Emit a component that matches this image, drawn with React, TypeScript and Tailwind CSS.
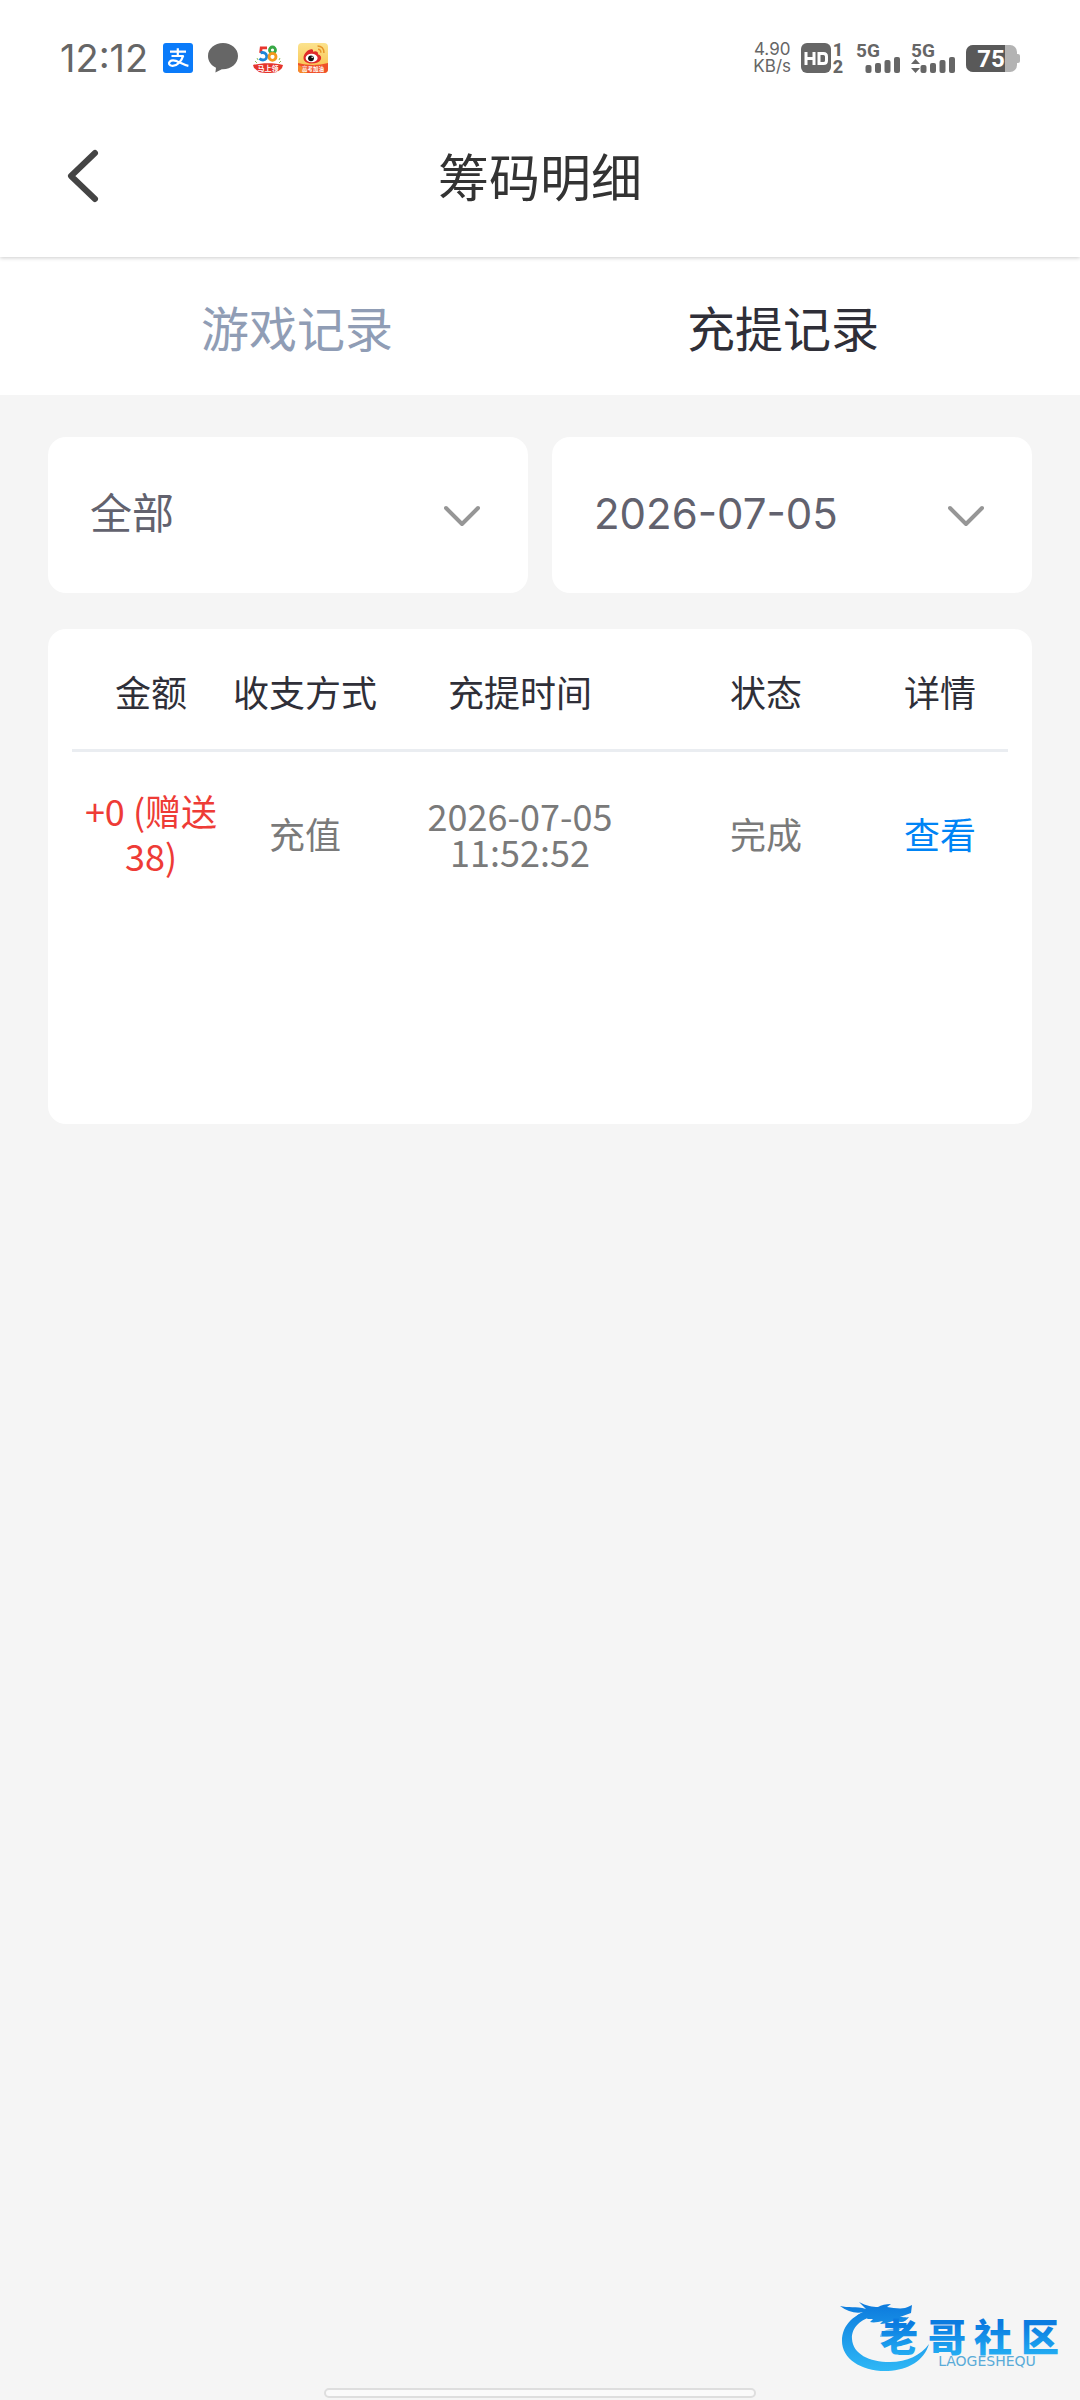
import React, { FC, useState } from 'react';

interface ChipRecord {
  id: string;
  amount: string;
  method: string;
  date: string;
  time: string;
  status: string;
}

interface FilterSelectProps {
  id: string;
  label: string;
  value: string;
  options: string[];
  onChange: (value: string) => void;
}

const records: ChipRecord[] = [
  {
    id: '1',
    amount: '+0 (赠送 38)',
    method: '充值',
    date: '2026-07-05',
    time: '11:52:52',
    status: '完成'
  }
];

const tabs = ['游戏记录', '充提记录'];

const AlipayIcon: FC = () => (
  <svg width="30" height="30" viewBox="0 0 30 30" aria-hidden="true">
    <rect width="30" height="30" rx="3" fill="#0a7bfa" />
    <g fill="none" stroke="#fff" strokeWidth="2.2">
      <path d="M7 8.6h16M14.8 5.2v8M8.5 13h12.2" />
      <path d="M20.2 12.6C18.6 17.8 14.6 23 9.4 22.8c-3.4-.1-4.2-2.6-2.6-4.2 2.4-2.2 6.6-.8 10 1 3 1.5 5.4 2.6 8.6 3.3" />
    </g>
  </svg>
);

const BubbleIcon: FC = () => (
  <svg width="30" height="30" viewBox="0 0 30 30" aria-hidden="true">
    <path
      d="M15 0C6.700 0 0 5.600 0 13c0 5.200 3.300 9.500 8 11.700L7.400 29.500l6.400-3.300C22.600 26.700 30 20.800 30 13 30 5.600 23.300 0 15 0Z"
      fill="#666"
    />
  </svg>
);

const ShopIcon: FC = () => (
  <svg className="overflow-visible" width="30" height="30" viewBox="0 0 30 30" aria-hidden="true">
    <g fill="none" strokeWidth="2.8">
      <path d="M14 4.8H8.200L7.600 10" stroke="#e8352e" />
      <path d="M7.500 9.800c7-2 8.500 7 2.500 7.200-1.500 0-2.500-.5-3.500-1.500" stroke="#1d86d8" />
      <circle cx="19.500" cy="7" r="3" stroke="#37a845" />
      <circle cx="19.500" cy="13.800" r="3.500" stroke="#f39a1d" />
    </g>
    <path d="M2 18l2 2M4 15l1 2M27 15l-1 2M28 18l-2 2" stroke="#8bbf5a" strokeWidth="1" />
    <path d="M0 22c8-2.500 22-2.500 30 0l-1 3c-1 1-3 3-5 4-5 1.300-13 1.300-18 0-2-1-3-3-5-4Z" fill="#e5352c" />
    <text x="15" y="27.500" fontSize="7" fontWeight="700" fill="#fff" textAnchor="middle">
      马上领
    </text>
  </svg>
);

const WeiboIcon: FC = () => (
  <svg className="overflow-visible" width="30" height="30" viewBox="0 0 30 30" aria-hidden="true">
    <defs>
      <linearGradient id="weibo-bg" x1="0" y1="0" x2="0" y2="1">
        <stop offset="0" stopColor="#fbe38e" />
        <stop offset="1" stopColor="#f9bd45" />
      </linearGradient>
      <clipPath id="weibo-clip">
        <rect width="30" height="30" rx="4" />
      </clipPath>
    </defs>
    <g clipPath="url(#weibo-clip)">
      <rect width="30" height="30" fill="url(#weibo-bg)" />
      <path d="M0 20c9 2.500 21 2.500 30 0v10H0Z" fill="#f0502a" />
      <path d="M0 22c4 1 7 4 9 8H0Z" fill="#f78c2a" />
      <path
        d="M5.500 15C5.500 10 11 5.500 14 6.200c1.500.4 1 2.300 1 2.600 2-1 5.500-.8 5 2.400 6 2 3.500 9.300-6.500 9.300-5 0-8-2.500-8-5.500Z"
        fill="#e02a2a"
      />
      <ellipse cx="13.600" cy="15" rx="6" ry="4.300" fill="#fff" />
      <circle cx="13" cy="15.300" r="2.900" fill="#111" />
      <circle cx="14.200" cy="14.200" r=".8" fill="#fff" />
      <path d="M19.500 3c4 0 6.600 2.600 6.400 7M20 6.300c2 0 3 1.400 2.800 3.400" fill="none" stroke="#e8952a" strokeWidth="1.500" />
    </g>
    <text x="15" y="28" fontSize="5.500" fontWeight="700" fill="#fff" textAnchor="middle">
      高考加油
    </text>
  </svg>
);

const HdIcon: FC = () => (
  <svg className="overflow-visible" width="45" height="30" viewBox="0 0 45 30" aria-hidden="true">
    <rect width="30" height="30" rx="6" fill="#666" />
    <path d="M5 9v13M13 9v13M5 15.500h8M18 10.500h4.500q3 0 3 3v4q0 3-3 3H18Z" fill="none" stroke="#fff" strokeWidth="3" />
    <g fill="#666" fontFamily="Roboto, sans-serif" fontSize="18" fontWeight="800" textAnchor="middle">
      <text x="37" y="13">1</text>
      <text x="37" y="30">2</text>
    </g>
  </svg>
);

const SignalIcon: FC<{ active?: boolean }> = ({ active }) => (
  <svg className="overflow-visible" width="45" height="30" viewBox="0 0 45 30" aria-hidden="true">
    <text x="0" y="14" fontFamily="Roboto, sans-serif" fontSize="19" fontWeight="700" fill="#666">
      5G
    </text>
    <g fill="#666">
      <rect x="9.500" y="22" width="6" height="8" rx="2" />
      <rect x="19" y="20" width="6" height="10" rx="2" />
      <rect x="28.500" y="17" width="6" height="13" rx="2" />
      <rect x="38" y="14" width="6" height="16" rx="2" />
      {active && <path d="M4.500 16l4.500 5H0ZM4.500 30l4.500-5H0Z" />}
    </g>
  </svg>
);

const BatteryIcon: FC = () => (
  <svg className="overflow-visible" width="54" height="27" viewBox="0 0 54 27" aria-hidden="true">
    <defs>
      <clipPath id="battery-clip">
        <rect width="51" height="27" rx="7" />
      </clipPath>
    </defs>
    <rect x="49" y="9" width="5" height="9" rx="2" fill="#b3b3b3" />
    <g clipPath="url(#battery-clip)">
      <rect width="51" height="27" fill="#b3b3b3" />
      <rect width="39" height="27" fill="#595959" />
    </g>
    <text x="25" y="22" fontFamily="Roboto, sans-serif" fontSize="24" fontWeight="700" fill="#fff" textAnchor="middle">
      75
    </text>
  </svg>
);

const StatusBar: FC = () => (
  <div className="flex h-[116px] items-center justify-between px-[60px] font-[Inter,'Noto_Sans_CJK_SC',sans-serif]">
    <div className="flex items-center gap-[15px]">
      <span className="text-[38px] leading-[38px] text-[#666]">12:12</span>
      <AlipayIcon />
      <BubbleIcon />
      <ShopIcon />
      <WeiboIcon />
    </div>
    <div className="flex items-center gap-[10px]">
      <div className="text-center text-[17px] leading-[17px] text-[#666]">
        <div>4.90</div>
        <div>KB/s</div>
      </div>
      <HdIcon />
      <SignalIcon />
      <SignalIcon active />
      <BatteryIcon />
    </div>
  </div>
);

const FilterSelect: FC<FilterSelectProps> = ({ id, label, value, options, onChange }) => (
  <div className="relative flex-1">
    <label htmlFor={id} className="sr-only">
      {label}
    </label>
    <select
      id={id}
      value={value}
      onChange={(e) => onChange(e.target.value)}
      className="block h-[156px] w-full appearance-none rounded-[18px] bg-white pr-24 pb-1 pl-[42px] text-[42px] text-[#62626e] outline-none"
    >
      {options.map((option) => (
        <option key={option} value={option}>
          {option}
        </option>
      ))}
    </select>
    <svg
      className="pointer-events-none absolute top-[68px] right-12"
      width="36"
      height="22"
      viewBox="0 0 36 22"
      fill="none"
      aria-hidden="true"
    >
      <path d="M2 3l16 16L34 3" stroke="#969696" strokeWidth="4" strokeLinecap="round" strokeLinejoin="round" />
    </svg>
  </div>
);

// Dragon ring with the community name next to it
const CommunityLogo: FC = () => (
  <svg className="overflow-visible" width="226" height="80" viewBox="0 0 226 80" role="img" aria-label="老哥社区">
    <defs>
      <linearGradient id="logo-blue" gradientUnits="userSpaceOnUse" x1="0" y1="5" x2="0" y2="75">
        <stop offset="0" stopColor="#0b78dc" />
        <stop offset="1" stopColor="#2fb8f6" />
      </linearGradient>
      <linearGradient id="logo-text" gradientUnits="userSpaceOnUse" x1="0" y1="28" x2="0" y2="58">
        <stop offset="0" stopColor="#0b7be0" />
        <stop offset="1" stopColor="#22abf2" />
      </linearGradient>
    </defs>
    <g fill="url(#logo-blue)">
      <path d="M36 13C16 17 4 29 4 45c0 18 20 31 46 30 20-1 36-10 41-27-8 11-22 18-39 18-21 0-37-8-38-23-.6-12 9-20 22-23Z" />
      <path d="M2 10c8 2 16 0 26 3l-7-7c7 4 14 5 19 5 3-2 8-3 13-3l-4 3c6 1 13 2 18 1 3-1 5-2 7-3l-1 8-11 4c4 0 7 1 9 0-2 3-5 5-8 5l-8-1c-5 2-9 3-13 3l3-3c-5 1-9 2-13 1l3-3-6 0 2-4c-5 2-9 1-13 2 2-3 5-4 8-5-8 2-16 0-24-6Z" />
      <path d="M44 36c7-4 14-3 22-7-3 6-9 7-14 10 5 0 11-1 15-3-5 7-14 9-22 12 5-4 8-5 11-8-5 1-9 1-14 1 0-2 1-4 2-5Z" opacity=".5" />
    </g>
    <text
      y="55"
      fontFamily="'Noto Sans CJK SC', sans-serif"
      fontSize="38"
      fontWeight="900"
      fill="url(#logo-text)"
      x="42 90 136 183"
    >
      老哥社区
    </text>
    <text x="149" y="70" fontFamily="'DejaVu Sans', sans-serif" fontSize="14" fill="#5aabd8" textAnchor="middle">
      LAOGESHEQU
    </text>
  </svg>
);

const RecordTable: FC = () => (
  <div className="min-h-[495px] rounded-[18px] bg-white px-6">
    <table className="w-full table-fixed border-collapse text-center text-[36px]">
      <thead>
        <tr className="h-[121px] border-b-3 border-[#eaedf1] text-[#2f2f38]">
          <th className="w-[158px] pt-1 font-normal whitespace-nowrap">金额</th>
          <th className="w-[150px] pt-1 font-normal whitespace-nowrap">收支方式</th>
          <th className="w-[280px] pt-1 font-normal whitespace-nowrap">充提时间</th>
          <th className="w-[212px] pt-1 font-normal whitespace-nowrap">状态</th>
          <th className="w-[136px] pt-1 font-normal whitespace-nowrap">详情</th>
        </tr>
      </thead>
      <tbody>
        {records.map((record) => (
          <tr key={record.id} className="h-[164px] text-[#7a7a7a]">
            <td className="px-2 leading-[45px] text-[#ee3b36]">{record.amount}</td>
            <td>{record.method}</td>
            <td className="leading-9">
              <div>{record.date}</div>
              <div>{record.time}</div>
            </td>
            <td>{record.status}</td>
            <td>
              <a href="#detail" className="text-[#0084f5]">
                查看
              </a>
            </td>
          </tr>
        ))}
      </tbody>
    </table>
  </div>
);

const App: FC = () => {
  const [activeTab, setActiveTab] = useState('充提记录');
  const [type, setType] = useState('全部');
  const [date, setDate] = useState('2026-07-05');

  return (
    <div className="relative min-h-screen bg-[#f5f5f5] font-[Inter,'Noto_Sans_CJK_SC',sans-serif]">
      <div className="relative z-10 bg-white shadow-[0_1px_4px_rgba(0,0,0,0.2)]">
        <StatusBar />
        <header className="grid h-[141px] grid-cols-[1fr_auto_1fr] items-start px-[66px] pt-[30px]">
          <button type="button" aria-label="返回" className="flex h-[60px] w-[60px] items-center">
            <svg width="34" height="56" viewBox="0 0 34 56" fill="none" aria-hidden="true">
              <path d="M29 5L5 28l24 23" stroke="#444" strokeWidth="6" strokeLinecap="round" strokeLinejoin="round" />
            </svg>
          </button>
          <h1 className="text-[51px] leading-[66px] text-[#333]">筹码明细</h1>
        </header>
      </div>

      <nav className="flex h-[138px] bg-white px-[54px]">
        {tabs.map((tab) => (
          <button
            key={tab}
            type="button"
            onClick={() => setActiveTab(tab)}
            className={`flex-1 pt-2 text-[48px] ${activeTab === tab ? 'text-[#2f2f38]' : 'text-[#909db5]'}`}
          >
            {tab}
          </button>
        ))}
      </nav>

      <main className="flex flex-col gap-9 px-12 pt-[42px] font-['Noto_Sans_CJK_SC',sans-serif]">
        <div className="flex gap-6 font-[Inter,'Noto_Sans_CJK_SC',sans-serif]">
          <FilterSelect id="type" label="类型" value={type} options={['全部', '充值', '提现']} onChange={setType} />
          <FilterSelect id="date" label="日期" value={date} options={['2026-07-05', '2026-07-04']} onChange={setDate} />
        </div>
        <RecordTable />
      </main>

      <div className="absolute right-4 bottom-6">
        <CommunityLogo />
      </div>
      {/* Home indicator */}
      <div className="absolute bottom-[2px] left-1/2 h-[10px] w-2/5 -translate-x-1/2 rounded-full border-2 border-[#dedede] bg-[#fafafa]" />
    </div>
  );
};

export default App;
